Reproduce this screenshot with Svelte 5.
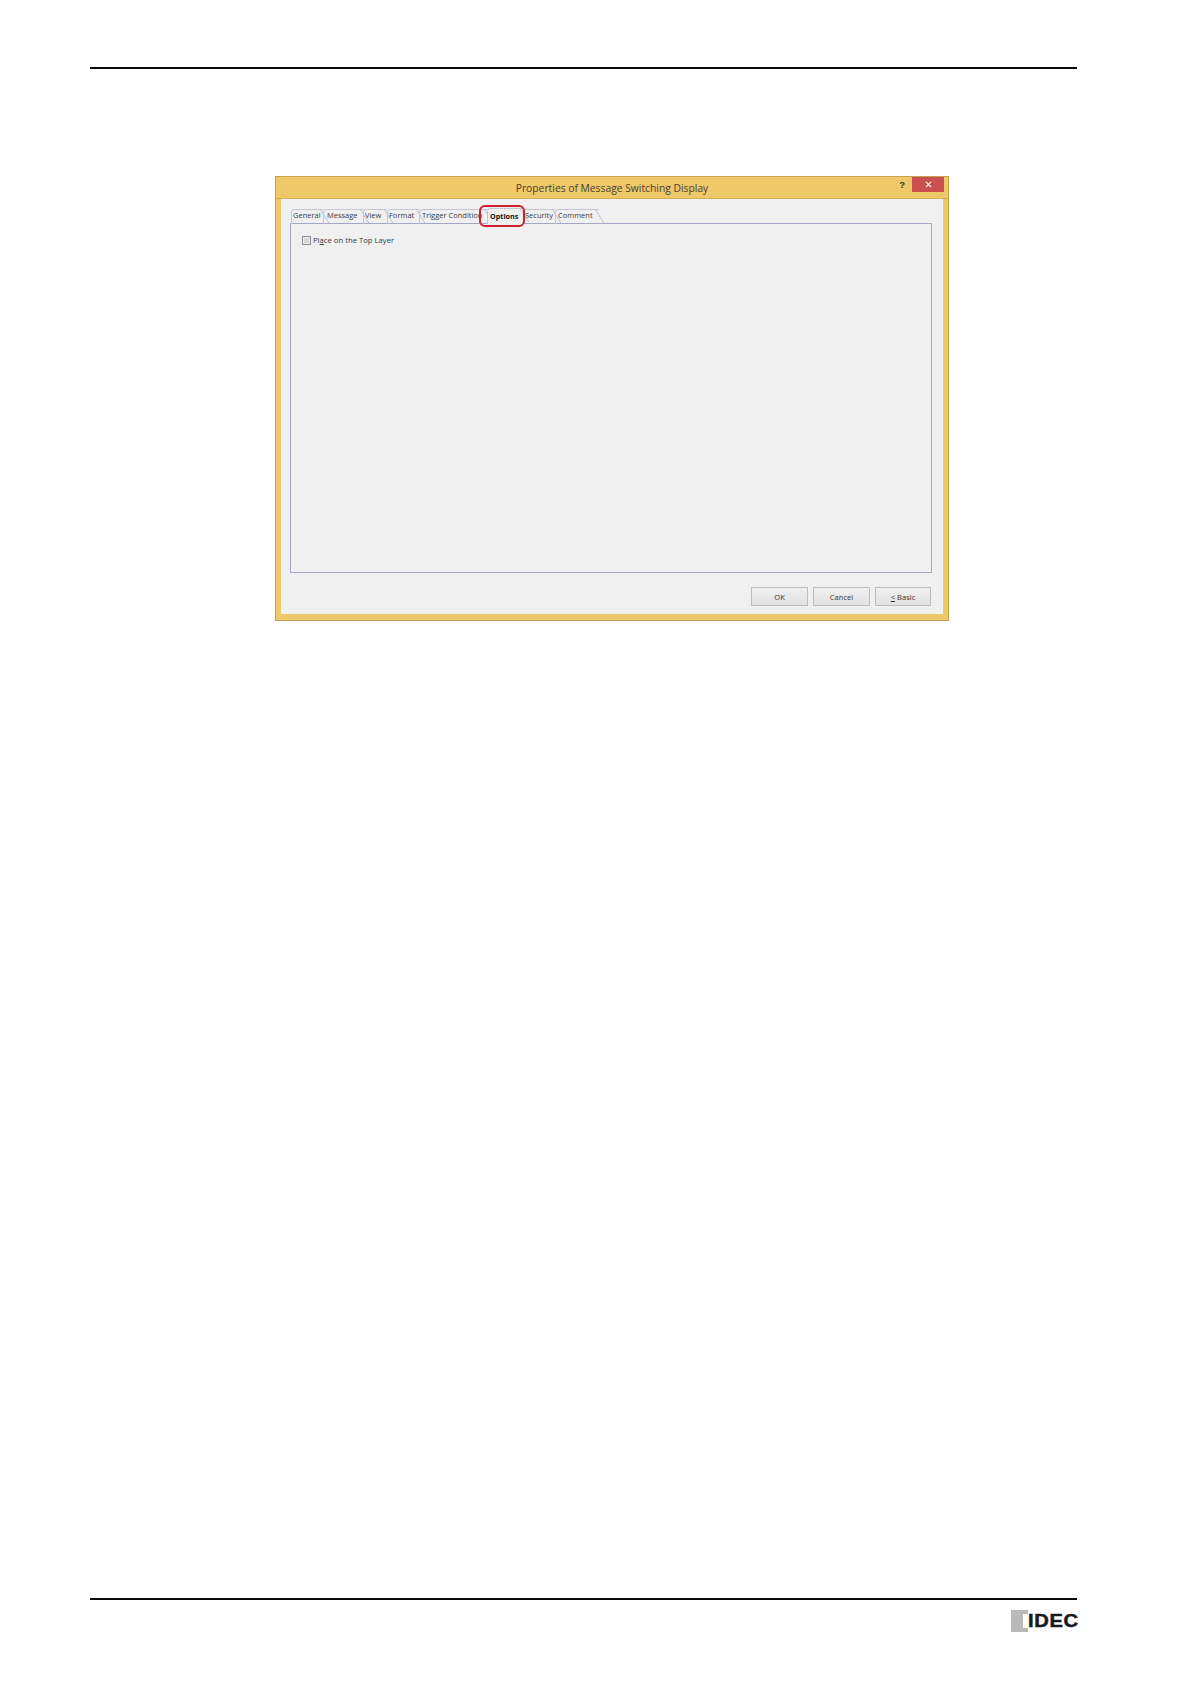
<script>
  const tabs = [
    { label: 'General', w: 32, pad: 1 },
    { label: 'Message', w: 40, pad: 3 },
    { label: 'View', w: 24, pad: 1 },
    { label: 'Format', w: 32, pad: 1 },
    { label: 'Trigger Condition', w: 68, pad: 2 },
    { label: 'Options', w: 36, pad: 2, active: true },
    { label: 'Security', w: 32, pad: 1 },
    { label: 'Comment', w: 43, pad: 2 }
  ];
</script>

<div class="page">
  <div class="rule top"></div>

  <div class="window">
    <div class="titlebar">
      <span class="title">Properties of Message Switching Display</span>
      <span class="help">?</span>
      <span class="close">
        <svg width="7" height="7" viewBox="0 0 8 8"><path d="M1 1L7 7M7 1L1 7" stroke="#fff" stroke-width="1.3" /></svg>
      </span>
    </div>
    <div class="body">
      <div class="tabs">
        {#each tabs as t}
          <div class="tab" class:active={t.active} style="width:{t.w}px;padding-left:{t.pad}px">
            <span>{t.label}</span>
          </div>
        {/each}
        <div class="marker"></div>
      </div>
      <div class="panel">
        <label class="check">
          <span class="box"></span>
          <span class="cap">Pl<u>a</u>ce on the Top Layer</span>
        </label>
      </div>
      <div class="buttons">
        <div class="btn">OK</div>
        <div class="btn">Cancel</div>
        <div class="btn basic"><u>&lt;</u>&nbsp;Basic</div>
      </div>
    </div>
  </div>

  <div class="spacer"></div>

  <div class="rule bottom"></div>
  <div class="footer">
    <div class="logo">
      <div class="mark"><span class="notch"></span></div>
      <span class="word">IDEC</span>
    </div>
  </div>
</div>

<style>
  :global(body) {
    margin: 0;
    background: #fff;
  }
  .page {
    height: 1684px;
    padding: 67px 114px 0 90px;
    box-sizing: border-box;
    display: flex;
    flex-direction: column;
    font-family: "Open Sans", "Noto Sans", sans-serif;
    overflow: hidden;
  }
  .rule {
    height: 2px;
    background: #0a0a0a;
    flex: none;
  }
  .window {
    flex: none;
    margin: 107px 0 0 185px;
    width: 674px;
    height: 445px;
    box-sizing: border-box;
    background: #efc869;
    border: 1px solid #c9a24f;
    display: flex;
    flex-direction: column;
  }
  .titlebar {
    height: 21px;
    flex: none;
    position: relative;
    display: flex;
    align-items: center;
    justify-content: center;
    border-bottom: 1px solid #d2ad58;
  }
  .title {
    font-size: 10.3px;
    color: #4a4030;
  }
  .help {
    position: absolute;
    right: 43px;
    top: 2px;
    font: bold 9.5px "Liberation Sans", sans-serif;
    color: #333;
  }
  .close {
    position: absolute;
    right: 4px;
    top: 0;
    width: 32px;
    height: 15px;
    background: #c9504f;
    display: flex;
    align-items: center;
    justify-content: center;
  }
  .body {
    flex: 1;
    margin: 0 5px 6px 5px;
    background: #f0f0f0;
    padding: 0 11px 0 9px;
    display: flex;
    flex-direction: column;
    border-bottom: 1px solid #f7f3e3;
  }
  .tabs {
    position: relative;
    display: flex;
    align-items: flex-end;
    height: 24px;
    padding-left: 1px;
    flex: none;
  }
  .tab {
    position: relative;
    box-sizing: border-box;
    height: 15px;
    margin-bottom: -1px;
    font-size: 7.5px;
    line-height: 11px;
    color: #3c3c3c;
    white-space: nowrap;
    border-top: 1px solid #c6c6d2;
    border-left: 1px solid #c6c6d2;
    border-top-left-radius: 4px;
    z-index: 1;
  }
  .tab::after {
    content: "";
    position: absolute;
    right: -2px;
    top: -1px;
    bottom: 1px;
    width: 1px;
    background: #c0c0cc;
    transform: skewX(32deg);
  }
  .tab.active {
    height: 16px;
    font-size: 7.2px;
    font-weight: 700;
    color: #111;
    background: #f0f0f0;
    border-bottom: 1px solid #f0f0f0;
    z-index: 2;
    line-height: 15px;
  }
  .marker {
    position: absolute;
    left: 189px;
    top: 6px;
    width: 46px;
    height: 22px;
    box-sizing: border-box;
    border: 2px solid #d0202c;
    border-radius: 6px;
    z-index: 3;
  }
  .panel {
    flex: none;
    height: 350px;
    box-sizing: border-box;
    border: 1px solid #a5a5c8;
    padding: 11px 0 0 11px;
  }
  .check {
    display: flex;
    align-items: center;
    gap: 2px;
    line-height: 10px;
    color: #3a3a3a;
  }
  .cap {
    font-size: 7.7px;
  }
  .box {
    width: 9px;
    height: 9px;
    box-sizing: border-box;
    border: 1px solid #8e8e8e;
    background: #d8d8d8;
    box-shadow: inset 0 0 0 1px #eee;
  }
  .buttons {
    display: flex;
    justify-content: flex-end;
    gap: 5px;
    margin-top: 14px;
    padding-right: 1px;
  }
  .btn {
    width: 57px;
    height: 19px;
    box-sizing: border-box;
    border: 1px solid #bcbcbc;
    background: linear-gradient(#f0f0f0, #e2e2e2);
    display: flex;
    align-items: center;
    justify-content: center;
    font-size: 7.6px;
    color: #333;
    white-space: pre;
  }
  .btn.basic {
    width: 56px;
  }
  .spacer {
    flex: none;
    height: 977px;
  }
  .footer {
    display: flex;
    justify-content: flex-end;
    margin-top: 10px;
  }
  .logo {
    display: flex;
    align-items: center;
    margin-right: -1px;
    height: 22px;
  }
  .mark {
    width: 17px;
    height: 22px;
    background: #b9b9b9;
    position: relative;
  }
  .notch {
    position: absolute;
    right: 0;
    top: 4px;
    bottom: 4px;
    width: 5px;
    background: #fff;
  }
  .word {
    font: 700 18px/22px "Liberation Sans", sans-serif;
    color: #1a1a1a;
    letter-spacing: 0.6px;
    transform: scaleX(1.12);
    transform-origin: left center;
    width: 50px;
    -webkit-text-stroke: 0.5px #1a1a1a;
  }
</style>
